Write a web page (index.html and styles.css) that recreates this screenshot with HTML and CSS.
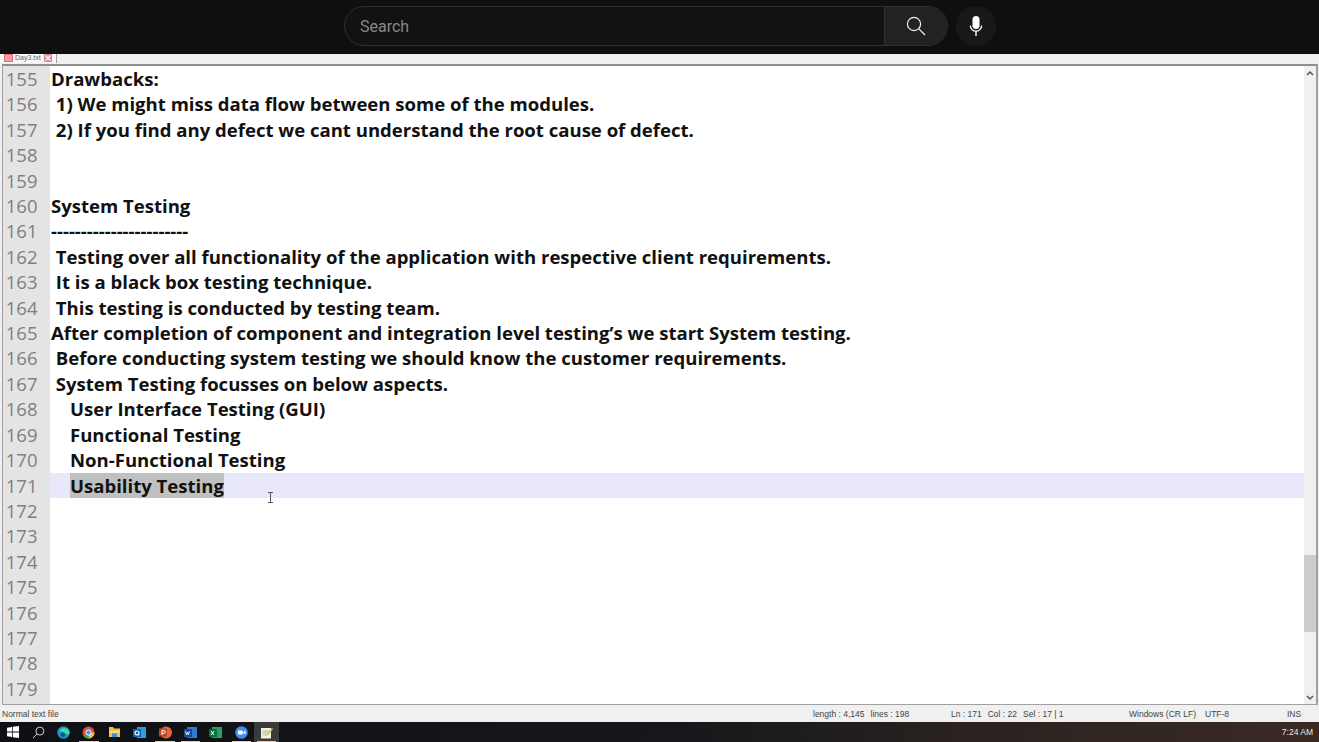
FILE: index.html
```html
<!DOCTYPE html>
<html lang="en">
<head>
    <meta charset="UTF-8">
    <meta name="viewport" content="width=device-width, initial-scale=1.0">
    <title>Day3.txt</title>
    <link rel="stylesheet" href="styles.css">
</head>
<body>

    <header class="topbar">
        <div class="search-box">
            <span class="search-text">Search</span>
            <button class="search-btn">
                <svg width="22" height="22" viewBox="0 0 22 22" fill="none" stroke="#f1f1f1" stroke-width="1.2"><circle cx="9" cy="9" r="6.6"/><path d="M13.7 13.7 20 20"/></svg>
            </button>
        </div>
        <button class="mic-btn">
            <svg width="16" height="22" viewBox="0 0 16 22" fill="#fff"><rect x="4.5" y="1" width="7" height="13" rx="3.5"/><path d="M1.8 10.5h1.3c0 3 2.2 5 4.9 5s4.900-2 4.900-5h1.300c0 3.500-2.500 6-5.500 6.300V21H7.300v-4.200C4.300 16.500 1.800 14 1.800 10.500z"/></svg>
        </button>
    </header>

    <div class="tabstrip">
        <div class="tab">
            <svg class="tab-file" width="9" height="9" viewBox="0 0 9 9"><rect width="9" height="9" fill="#e8697a"/><path d="M1 3h7M1 5h7M1 7h7" stroke="#fbd6da"/></svg>
            <span class="tab-name">Day3.txt</span>
            <svg class="tab-close" width="8" height="8" viewBox="0 0 8 8"><rect width="8" height="8" fill="#d98a92"/><path d="M1.500 1.500l5 5M6.500 1.500l-5 5" stroke="#fff" stroke-width="1.200"/></svg>
        </div>
    </div>

    <main class="editor">
        <div class="lines">
            <div class="line"><span class="num">155</span><span class="code">Drawbacks:</span></div>
            <div class="line"><span class="num">156</span><span class="code"> 1) We might miss data flow between some of the modules.</span></div>
            <div class="line"><span class="num">157</span><span class="code"> 2) If you find any defect we cant understand the root cause of defect.</span></div>
            <div class="line"><span class="num">158</span><span class="code"></span></div>
            <div class="line"><span class="num">159</span><span class="code"></span></div>
            <div class="line"><span class="num">160</span><span class="code">System Testing</span></div>
            <div class="line"><span class="num">161</span><span class="code">-----------------------</span></div>
            <div class="line"><span class="num">162</span><span class="code"> Testing over all functionality of the application with respective client requirements.</span></div>
            <div class="line"><span class="num">163</span><span class="code"> It is a black box testing technique.</span></div>
            <div class="line"><span class="num">164</span><span class="code"> This testing is conducted by testing team.</span></div>
            <div class="line"><span class="num">165</span><span class="code">After completion of component and integration level testing’s we start System testing.</span></div>
            <div class="line"><span class="num">166</span><span class="code"> Before conducting system testing we should know the customer requirements.</span></div>
            <div class="line"><span class="num">167</span><span class="code"> System Testing focusses on below aspects.</span></div>
            <div class="line"><span class="num">168</span><span class="code sub">User Interface Testing (GUI)</span></div>
            <div class="line"><span class="num">169</span><span class="code sub">Functional Testing</span></div>
            <div class="line"><span class="num">170</span><span class="code sub">Non-Functional Testing</span></div>
            <div class="line current"><span class="num">171</span><span class="code sub"><span class="selected">Usability Testing</span></span></div>
            <div class="line"><span class="num">172</span><span class="code"></span></div>
            <div class="line"><span class="num">173</span><span class="code"></span></div>
            <div class="line"><span class="num">174</span><span class="code"></span></div>
            <div class="line"><span class="num">175</span><span class="code"></span></div>
            <div class="line"><span class="num">176</span><span class="code"></span></div>
            <div class="line"><span class="num">177</span><span class="code"></span></div>
            <div class="line"><span class="num">178</span><span class="code"></span></div>
            <div class="line"><span class="num">179</span><span class="code"></span></div>
        </div>
        <div class="scrollbar">
            <svg width="8" height="6" viewBox="0 0 8 6" fill="none" stroke="#555" stroke-width="1.500"><path d="M1 5l3-3 3 3"/></svg>
            <div class="thumb"></div>
            <svg width="8" height="6" viewBox="0 0 8 6" fill="none" stroke="#555" stroke-width="1.500"><path d="M1 1l3 3 3-3"/></svg>
        </div>
        <svg class="cursor" width="7" height="11" viewBox="0 0 7 11" fill="none" stroke="#555"><path d="M1 .5h5M3.500 .5v10M1 10.500h5"/></svg>
    </main>

    <footer class="statusbar">
        <span>Normal text file</span>
        <div class="st-group"><span>length : 4,145</span><span>lines : 198</span></div>
        <div class="st-group"><span>Ln : 171</span><span>Col : 22</span><span>Sel : 17 | 1</span></div>
        <span>Windows (CR LF)</span>
        <span>UTF-8</span>
        <span>INS</span>
    </footer>

    <div class="taskbar">
        <div class="task-icon"><svg width="12" height="12" viewBox="0 0 13 13" fill="#fff"><path d="M0 1.800 5.500 1v5H0zM6.300.900 13 0v6H6.300zM0 7h5.500v5L0 11.200zM6.300 7H13v6l-6.700-.9z"/></svg></div>
        <div class="task-icon"><svg width="13" height="13" viewBox="0 0 14 14" fill="none" stroke="#ddd" stroke-width="1"><circle cx="8.500" cy="5.500" r="4.300"/><path d="M5.300 8.700 1 13"/></svg></div>
        <div class="task-icon"><svg width="13" height="13" viewBox="0 0 13 13"><circle cx="6.500" cy="6.500" r="6.300" fill="#1a8fd0"/><path d="M2.500 5C4 1 10.500 1 12.500 6c.4 2.500-3 3-4 1.500" fill="#3ddc97"/><circle cx="6" cy="8.500" r="2.200" fill="#0a4f8f"/></svg></div>
        <div class="task-icon open"><svg width="13" height="13" viewBox="0 0 13 13"><circle cx="6.500" cy="6.500" r="6" fill="#e0493a"/><path d="M6.500 6.500 1.300 9.500A6 6 0 0 0 9 12z" fill="#3aa757"/><path d="M6.500 6.500 12.500 6.500A6 6 0 0 1 7 12.500z" fill="#f5c22e"/><circle cx="6.500" cy="6.500" r="2.600" fill="#4a8df0" stroke="#fff"/></svg></div>
        <div class="task-icon"><svg width="13" height="12" viewBox="0 0 13 12"><path d="M1 1h4l1 1.500h6V11H1z" fill="#f2c14e"/><rect x="1" y="5" width="11" height="1.500" fill="#fbe08a"/><rect x="4" y="7.500" width="5" height="3.500" fill="#3a8fd6"/></svg></div>
        <div class="task-icon"><svg width="13" height="13" viewBox="0 0 13 13"><rect x="4" y="1" width="9" height="11" fill="#2a9fe0"/><rect x="0" y="3" width="8" height="8" fill="#0f63b5"/><circle cx="4" cy="7" r="2" fill="none" stroke="#fff" stroke-width="1.200"/></svg></div>
        <div class="task-icon open"><svg width="13" height="13" viewBox="0 0 13 13"><circle cx="7" cy="6.500" r="6" fill="#e8663c"/><rect x="0" y="2.500" width="8" height="8" fill="#c4401f"/><path d="M3 9V4.500h1.800a1.300 1.300 0 0 1 0 2.800H3" fill="none" stroke="#fff"/></svg></div>
        <div class="task-icon open"><svg width="13" height="13" viewBox="0 0 13 13"><rect x="3" y="1" width="10" height="11" fill="#2b7cd3"/><rect x="0" y="3" width="8" height="8" fill="#124a9c"/><path d="M1.500 5l1 4 1-3 1 3 1-4" fill="none" stroke="#fff" stroke-width=".8"/></svg></div>
        <div class="task-icon"><svg width="13" height="13" viewBox="0 0 13 13"><rect x="3" y="1" width="10" height="11" fill="#21a366"/><rect x="0" y="3" width="8" height="8" fill="#0e6b3c"/><path d="M2 5l3 4M5 5 2 9" fill="none" stroke="#fff"/></svg></div>
        <div class="task-icon open"><svg width="13" height="13" viewBox="0 0 13 13"><circle cx="6.500" cy="6.500" r="6.300" fill="#3f8cf5"/><rect x="2.800" y="4.500" width="5" height="4" rx="1" fill="#fff"/><path d="M8.300 6 10.500 4.500v4L8.300 7z" fill="#fff"/></svg></div>
        <div class="task-icon active open"><svg width="13" height="13" viewBox="0 0 13 13"><rect x="1" y="2" width="10" height="10.500" fill="#f3f0d8"/><path d="M2.500 5h7M2.500 7h7M2.500 9h5" stroke="#9aa" stroke-width=".8"/><path d="M7 8 12 2l1 1-5 6z" fill="#d8c23a"/></svg></div>
        <span class="clock">7:24 AM</span>
    </div>

</body>
</html>
```

FILE: styles.css
```css
* { box-sizing: border-box; }
html, body { height: 100%; }
body {
    margin: 0;
    width: 1319px;
    height: 742px;
    overflow: hidden;
    display: flex;
    flex-direction: column;
    background: #f0f0f0;
    font-family: "Open Sans", sans-serif;
}

/* top bar */
.topbar {
    height: 54px;
    flex: none;
    background: #0f0f0f;
    display: flex;
    align-items: flex-start;
    padding: 6px 0 0 344px;
    gap: 8px;
}
.search-box {
    width: 604px;
    height: 40px;
    border: 1px solid #303030;
    border-radius: 20px;
    background: #121212;
    display: flex;
    align-items: center;
    overflow: hidden;
}
.search-text {
    flex: 1;
    padding-left: 15px;
    color: #888;
    font-family: Roboto, sans-serif;
    font-size: 16px;
}
.search-btn {
    width: 63px;
    height: 38px;
    border: none;
    border-left: 1px solid #303030;
    background: #222;
    padding: 0;
    display: flex;
    align-items: center;
    justify-content: center;
}
.mic-btn {
    width: 40px;
    height: 40px;
    border: none;
    border-radius: 50%;
    background: #181818;
    padding: 0;
    display: flex;
    align-items: center;
    justify-content: center;
}

/* tabs */
.tabstrip {
    height: 10px;
    flex: none;
    background: #f0f0f0;
    overflow: hidden;
}
.tab {
    width: 57px;
    height: 9px;
    padding: 0 0 2px 4px;
    background: #f7f7f7;
    border-right: 1px solid #a0a0a0;
    display: flex;
    align-items: center;
    color: #666;
    font-family: "Liberation Sans", sans-serif;
    font-size: 7px;
    line-height: 7px;
}
.tab-name { margin: 0 3px 0 2px; }

/* editor */
.editor {
    position: relative;
    height: 641px;
    flex: none;
    display: flex;
    margin: 0 1px 0 2px;
    border: 1px solid #a0a0a0;
    border-top: 2px solid #8f8f8f;
    border-right: 2px solid #a0a0a0;
    background: #fff;
}
.lines {
    flex: 1;
    min-width: 0;
    overflow: hidden;
    background: linear-gradient(to right, #e4e4e4 47px, #fff 47px);
}
.line {
    display: flex;
    height: 25.42px;
    line-height: 25.42px;
    white-space: pre;
}
.num {
    width: 47px;
    flex: none;
    padding-right: 12.500px;
    text-align: right;
    color: #808080;
    font-size: 18.500px;
}
.code {
    flex: 1;
    padding-left: 1px;
    color: #111;
    font-size: 18.560px;
    font-weight: 700;
}
.sub { padding-left: 20px; }
.current .code { background: #e8e8fa; }
.selected { background: #c0c0c0; display: inline-block; height: 25px; }
.scrollbar {
    width: 12px;
    flex: none;
    background: #f0f0f0;
    display: flex;
    flex-direction: column;
    align-items: center;
    padding: 4px 0 3px;
}
.thumb {
    width: 100%;
    height: 77px;
    margin-top: 479px;
    margin-bottom: auto;
    background: #cdcdcd;
}
.cursor {
    position: absolute;
    left: 264px;
    top: 426px;
}

/* status bar */
.statusbar {
    height: 17px;
    flex: none;
    display: grid;
    grid-template-columns: 811px 138px 178px 76px 82px auto;
    padding-left: 2px;
    background: #f0f0f0;
    color: #444;
    font-family: "Liberation Sans", sans-serif;
    font-size: 8.500px;
    line-height: 19px;
    white-space: nowrap;
}
.st-group {
    display: flex;
    gap: 6px;
}

/* windows taskbar */
.taskbar {
    height: 20px;
    flex: none;
    display: flex;
    align-items: center;
    background: linear-gradient(to right, #0e1014 0%, #15171b 50%, #2b2320 75%, #3a2a24 100%);
}
.task-icon {
    position: relative;
    width: 25.400px;
    height: 20px;
    flex: none;
    display: flex;
    align-items: center;
    justify-content: center;
}
.task-icon.open::after {
    content: "";
    position: absolute;
    left: 3px;
    right: 3px;
    bottom: 0;
    height: 1px;
    background: #e8c8b0;
}
.task-icon.active { background: #3a3a3a; }
.clock {
    margin-left: auto;
    padding-right: 6px;
    color: #e8e8e8;
    font-family: "Liberation Sans", sans-serif;
    font-size: 8.500px;
}
```
